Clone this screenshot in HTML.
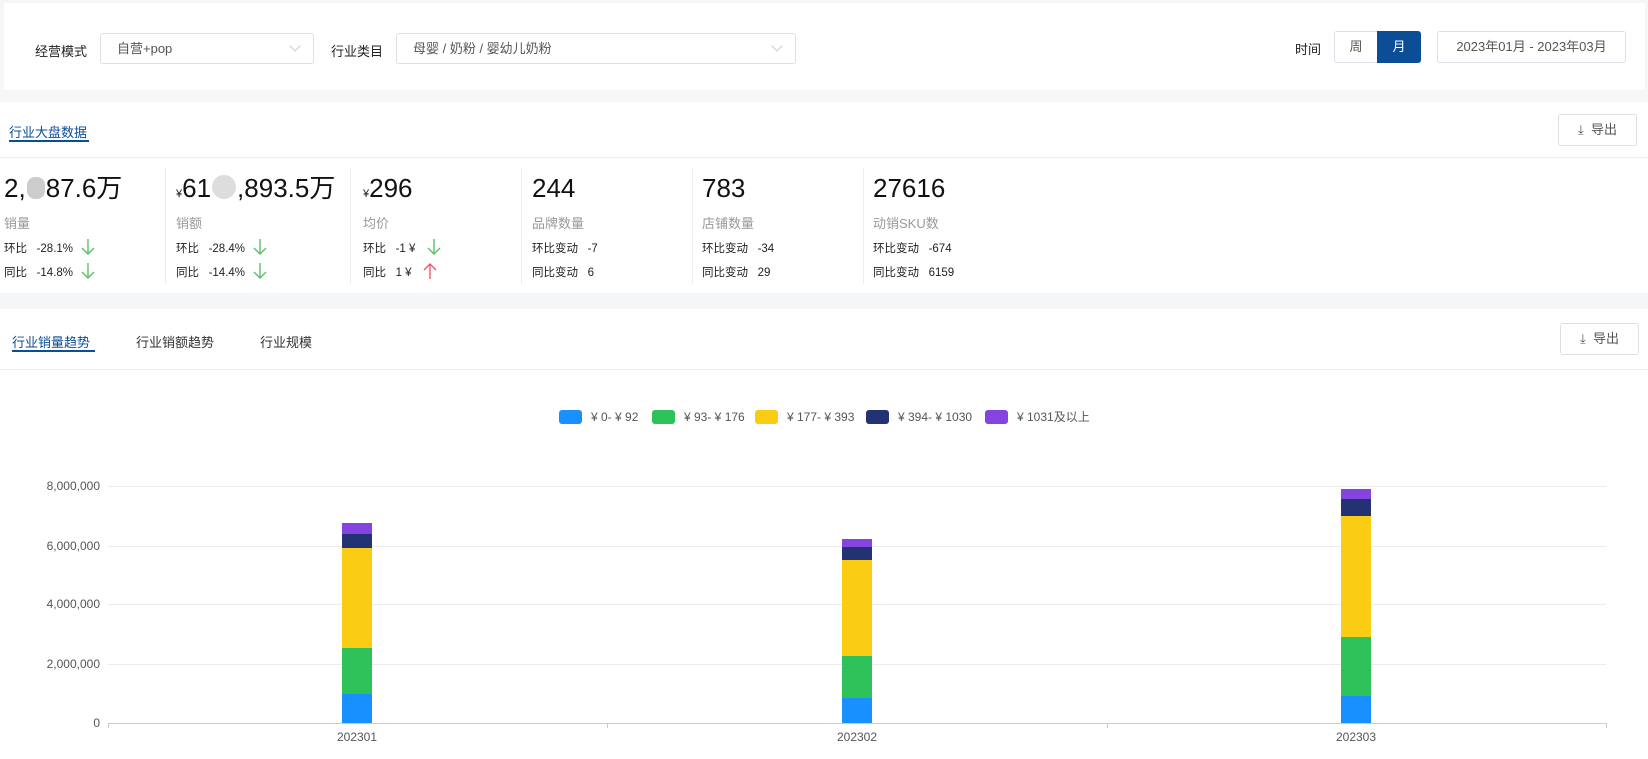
<!DOCTYPE html>
<html><head><meta charset="utf-8"><style>
*{margin:0;padding:0;box-sizing:border-box}
body{width:1648px;height:759px;background:#f5f6f8;font-family:"Liberation Sans","Noto Sans CJK SC",sans-serif;position:relative;overflow:hidden;color:#333}
.a{position:absolute}
.card{position:absolute;background:#fff}
.lbl{font-size:13px;color:#222}
.sel{position:absolute;border:1px solid #dcdfe6;border-radius:3px;background:#fff;font-size:13px;color:#555;padding-left:16px;line-height:29px}
.chev{position:absolute;right:14px;top:8px;width:8px;height:8px;border-right:1px solid #ccc;border-bottom:1px solid #ccc;transform:rotate(45deg)}
.btn{position:absolute;border:1px solid #dcdfe6;border-radius:3px;background:#fff;font-size:13px;color:#555;text-align:center}
.big{position:absolute;font-size:26px;color:#111;line-height:30px}
.big small{font-size:11px}
.sub{position:absolute;font-size:13px;color:#999}
.row{position:absolute;font-size:11.5px;color:#222;white-space:nowrap}
.row svg{vertical-align:-4px;margin-left:4px}
.dv{position:absolute;top:168px;width:1px;height:116px;background:#eee}
.grid{position:absolute;left:108px;width:1498px;height:1px;background:#ebebeb}
.yl{position:absolute;font-size:12px;color:#555;text-align:right;width:90px}
.leg{position:absolute;top:410px;width:23px;height:14px;border-radius:3px}
.lt{position:absolute;top:409px;font-size:12px;line-height:16px;color:#555;white-space:nowrap}
.bar{position:absolute;width:30px}
.xl{position:absolute;top:730px;font-size:12px;color:#555;width:60px;text-align:center}
</style></head><body>
<svg width="0" height="0" style="position:absolute"><defs>
<symbol id="dn" viewBox="0 0 16 18"><path d="M8 1V16M2 10L8 16L14 10" fill="none" stroke="#5cbf6a" stroke-width="1.4"/></symbol>
<symbol id="up" viewBox="0 0 16 18"><path d="M8 17V2M2 8L8 2L14 8" fill="none" stroke="#ee5a6a" stroke-width="1.4"/></symbol>
</defs></svg>
<div class="card" style="left:4px;top:3px;width:1641px;height:87px"></div>
<div class="a lbl" style="left:35px;top:41px">经营模式</div>
<div class="sel" style="left:100px;top:33px;width:214px;height:31px">自营+pop<span class="chev"></span></div>
<div class="a lbl" style="left:331px;top:41px">行业类目</div>
<div class="sel" style="left:396px;top:33px;width:400px;height:31px">母婴 / 奶粉 / 婴幼儿奶粉<span class="chev"></span></div>
<div class="a lbl" style="left:1295px;top:39px">时间</div>
<div class="btn" style="left:1334px;top:31px;width:44px;height:32px;line-height:30px;border-radius:3px 0 0 3px">周</div>
<div class="a" style="left:1377px;top:31px;width:44px;height:32px;line-height:32px;background:#0b4d97;color:#fff;font-size:13px;text-align:center;border-radius:0 3px 3px 0">月</div>
<div class="btn" style="left:1437px;top:31px;width:189px;height:32px;line-height:30px">2023年01月 - 2023年03月</div>

<div class="card" style="left:0;top:102px;width:1648px;height:191px"></div>
<div class="a" style="left:9px;top:122px;font-size:13px;color:#0b4d97">行业大盘数据</div>
<div class="a" style="left:9px;top:140px;width:80px;height:2px;background:#0b4d97"></div>
<div class="a" style="left:0;top:157px;width:1648px;height:1px;background:#eee"></div>
<div class="btn" style="left:1558px;top:114px;width:79px;height:32px;line-height:30px">⤓&nbsp; 导出</div>

<div class="big" style="left:4px;top:173px">2,<span style="display:inline-block;width:18px;height:22px;background:#ccc;border-radius:8px;vertical-align:-2px;margin:0 1px"></span>87.6万</div>
<div class="big" style="left:176px;top:173px"><small>¥</small>61<span style="display:inline-block;width:24px;height:24px;background:#ddd;border-radius:12px;vertical-align:-2px;margin:0 1px"></span>,893.5万</div>
<div class="big" style="left:363px;top:173px"><small>¥</small>296</div>
<div class="big" style="left:532px;top:173px">244</div>
<div class="big" style="left:702px;top:173px">783</div>
<div class="big" style="left:873px;top:173px">27616</div>
<div class="sub" style="left:4px;top:213px">销量</div>
<div class="sub" style="left:176px;top:213px">销额</div>
<div class="sub" style="left:363px;top:213px">均价</div>
<div class="sub" style="left:532px;top:213px">品牌数量</div>
<div class="sub" style="left:702px;top:213px">店铺数量</div>
<div class="sub" style="left:873px;top:213px">动销SKU数</div>
<div class="row" style="left:4px;top:238px">环比&nbsp;&nbsp; -28.1% <svg width="16" height="18"><use href="#dn"/></svg></div>
<div class="row" style="left:4px;top:262px">同比&nbsp;&nbsp; -14.8% <svg width="16" height="18"><use href="#dn"/></svg></div>
<div class="row" style="left:176px;top:238px">环比&nbsp;&nbsp; -28.4% <svg width="16" height="18"><use href="#dn"/></svg></div>
<div class="row" style="left:176px;top:262px">同比&nbsp;&nbsp; -14.4% <svg width="16" height="18"><use href="#dn"/></svg></div>
<div class="row" style="left:363px;top:238px">环比&nbsp;&nbsp; -1 ¥&nbsp; <svg width="16" height="18"><use href="#dn"/></svg></div>
<div class="row" style="left:363px;top:262px">同比&nbsp;&nbsp; 1 ¥&nbsp; <svg width="16" height="18"><use href="#up"/></svg></div>
<div class="row" style="left:532px;top:240px">环比变动&nbsp;&nbsp; -7</div>
<div class="row" style="left:532px;top:264px">同比变动&nbsp;&nbsp; 6</div>
<div class="row" style="left:702px;top:240px">环比变动&nbsp;&nbsp; -34</div>
<div class="row" style="left:702px;top:264px">同比变动&nbsp;&nbsp; 29</div>
<div class="row" style="left:873px;top:240px">环比变动&nbsp;&nbsp; -674</div>
<div class="row" style="left:873px;top:264px">同比变动&nbsp;&nbsp; 6159</div>
<div class="dv" style="left:165px"></div><div class="dv" style="left:350px"></div><div class="dv" style="left:521px"></div><div class="dv" style="left:692px"></div><div class="dv" style="left:863px"></div>

<div class="card" style="left:0;top:309px;width:1648px;height:450px"></div>
<div class="a" style="left:12px;top:332px;font-size:13px;color:#0b4d97">行业销量趋势</div>
<div class="a" style="left:12px;top:350px;width:83px;height:2px;background:#0b4d97"></div>
<div class="a" style="left:136px;top:332px;font-size:13px;color:#333">行业销额趋势</div>
<div class="a" style="left:260px;top:332px;font-size:13px;color:#333">行业规模</div>
<div class="a" style="left:0;top:369px;width:1648px;height:1px;background:#eee"></div>
<div class="btn" style="left:1560px;top:323px;width:79px;height:32px;line-height:30px">⤓&nbsp; 导出</div>

<div class="leg" style="left:559px;background:#1890ff"></div><div class="lt" style="left:591px">¥ 0- ¥ 92</div>
<div class="leg" style="left:652px;background:#2fc25b"></div><div class="lt" style="left:684px">¥ 93- ¥ 176</div>
<div class="leg" style="left:755px;background:#facc14"></div><div class="lt" style="left:787px">¥ 177- ¥ 393</div>
<div class="leg" style="left:866px;background:#223273"></div><div class="lt" style="left:898px">¥ 394- ¥ 1030</div>
<div class="leg" style="left:985px;background:#8543e0"></div><div class="lt" style="left:1017px">¥ 1031及以上</div>

<div class="grid" style="top:486px"></div><div class="grid" style="top:546px"></div><div class="grid" style="top:604px"></div><div class="grid" style="top:664px"></div>
<div class="a" style="left:108px;top:723px;width:1498px;height:1px;background:#ccc"></div>
<div class="a" style="left:108px;top:723px;width:1px;height:5px;background:#ccc"></div>
<div class="a" style="left:607px;top:723px;width:1px;height:5px;background:#ccc"></div>
<div class="a" style="left:1107px;top:723px;width:1px;height:5px;background:#ccc"></div>
<div class="a" style="left:1606px;top:723px;width:1px;height:5px;background:#ccc"></div>
<div class="yl" style="left:10px;top:479px">8,000,000</div>
<div class="yl" style="left:10px;top:539px">6,000,000</div>
<div class="yl" style="left:10px;top:597px">4,000,000</div>
<div class="yl" style="left:10px;top:657px">2,000,000</div>
<div class="yl" style="left:10px;top:716px">0</div>

<div class="bar" style="left:342px;top:523px;height:11px;background:#8543e0"></div>
<div class="bar" style="left:342px;top:534px;height:14px;background:#223273"></div>
<div class="bar" style="left:342px;top:548px;height:100px;background:#facc14"></div>
<div class="bar" style="left:342px;top:648px;height:46px;background:#2fc25b"></div>
<div class="bar" style="left:342px;top:694px;height:29px;background:#1890ff"></div>

<div class="bar" style="left:842px;top:539px;height:8px;background:#8543e0"></div>
<div class="bar" style="left:842px;top:547px;height:13px;background:#223273"></div>
<div class="bar" style="left:842px;top:560px;height:96px;background:#facc14"></div>
<div class="bar" style="left:842px;top:656px;height:42px;background:#2fc25b"></div>
<div class="bar" style="left:842px;top:698px;height:25px;background:#1890ff"></div>

<div class="bar" style="left:1341px;top:489px;height:10px;background:#8543e0"></div>
<div class="bar" style="left:1341px;top:499px;height:17px;background:#223273"></div>
<div class="bar" style="left:1341px;top:516px;height:121px;background:#facc14"></div>
<div class="bar" style="left:1341px;top:637px;height:59px;background:#2fc25b"></div>
<div class="bar" style="left:1341px;top:696px;height:27px;background:#1890ff"></div>

<div class="xl" style="left:327px">202301</div>
<div class="xl" style="left:827px">202302</div>
<div class="xl" style="left:1326px">202303</div>
</body></html>
